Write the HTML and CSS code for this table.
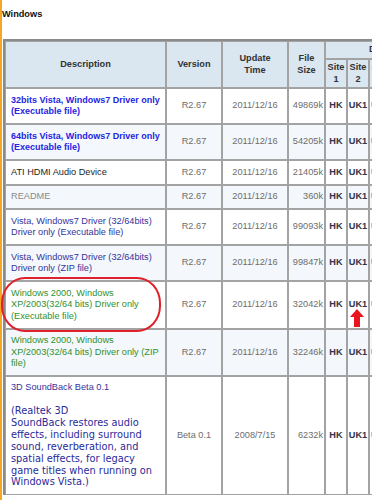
FILE: index.html
```html
<!DOCTYPE html>
<html>
<head>
<meta charset="utf-8">
<link rel="stylesheet" href="styles.css">
</head>
<body>
<div class="page">
  <div class="title">Windows</div>
  <table class="dl">
    <colgroup>
      <col class="c-desc"><col class="c-ver"><col class="c-time"><col class="c-size">
      <col class="c-site"><col class="c-site"><col class="c-site"><col class="c-site"><col class="c-site"><col class="c-site">
    </colgroup>
    <thead>
      <tr class="h1">
        <th rowspan="2">Description</th>
        <th rowspan="2">Version</th>
        <th rowspan="2">Update<br>Time</th>
        <th rowspan="2">File<br>Size</th>
        <th colspan="6">Download</th>
      </tr>
      <tr class="h2">
        <th class="site">Site<br>1</th><th class="site">Site<br>2</th><th class="site">Site<br>3</th><th class="site">Site<br>4</th><th class="site">Site<br>5</th><th class="site">Site<br>6</th>
      </tr>
    </thead>
    <tbody>
      <tr>
        <td class="desc blue">32bits Vista, Windows7 Driver only<br>(Executable file)</td>
        <td class="c">R2.67</td><td class="c">2011/12/16</td><td class="r">49869k</td>
        <td class="s">HK</td><td class="s">UK1</td><td class="s o">US1</td><td class="s">CN1</td><td class="s">CN2</td><td class="s">TW</td>
      </tr>
      <tr class="alt">
        <td class="desc blue">64bits Vista, Windows7 Driver only<br>(Executable file)</td>
        <td class="c">R2.67</td><td class="c">2011/12/16</td><td class="r">54205k</td>
        <td class="s">HK</td><td class="s">UK1</td><td class="s o">US1</td><td class="s">CN1</td><td class="s">CN2</td><td class="s">TW</td>
      </tr>
      <tr>
        <td class="desc black">ATI HDMI Audio Device</td>
        <td class="c">R2.67</td><td class="c">2011/12/16</td><td class="r">21405k</td>
        <td class="s">HK</td><td class="s">UK1</td><td class="s o">US1</td><td class="s">CN1</td><td class="s">CN2</td><td class="s">TW</td>
      </tr>
      <tr class="alt">
        <td class="desc grey">README</td>
        <td class="c">R2.67</td><td class="c">2011/12/16</td><td class="r">360k</td>
        <td class="s">HK</td><td class="s">UK1</td><td class="s o">US1</td><td class="s">CN1</td><td class="s">CN2</td><td class="s">TW</td>
      </tr>
      <tr>
        <td class="desc navy">Vista, Windows7 Driver (32/64bits)<br>Driver only (Executable file)</td>
        <td class="c">R2.67</td><td class="c">2011/12/16</td><td class="r">99093k</td>
        <td class="s">HK</td><td class="s">UK1</td><td class="s o">US1</td><td class="s">CN1</td><td class="s">CN2</td><td class="s">TW</td>
      </tr>
      <tr class="alt">
        <td class="desc navy">Vista, Windows7 Driver (32/64bits)<br>Driver only (ZIP file)</td>
        <td class="c">R2.67</td><td class="c">2011/12/16</td><td class="r">99847k</td>
        <td class="s">HK</td><td class="s">UK1</td><td class="s o">US1</td><td class="s">CN1</td><td class="s">CN2</td><td class="s">TW</td>
      </tr>
      <tr class="tall">
        <td class="desc green">Windows 2000, Windows<br>XP/2003(32/64 bits) Driver only<br>(Executable file)</td>
        <td class="c">R2.67</td><td class="c">2011/12/16</td><td class="r">32042k</td>
        <td class="s">HK</td><td class="s">UK1</td><td class="s o">US1</td><td class="s">CN1</td><td class="s">CN2</td><td class="s">TW</td>
      </tr>
      <tr class="alt tall">
        <td class="desc green">Windows 2000, Windows<br>XP/2003(32/64 bits) Driver only (ZIP<br>file)</td>
        <td class="c">R2.67</td><td class="c">2011/12/16</td><td class="r">32246k</td>
        <td class="s">HK</td><td class="s">UK1</td><td class="s o">US1</td><td class="s">CN1</td><td class="s">CN2</td><td class="s">TW</td>
      </tr>
      <tr>
        <td class="desc navy sb">
          <div class="sb-title">3D SoundBack Beta 0.1</div>
          <p class="sb-text">(Realtek 3D<br>SoundBack restores audio<br>effects, including surround<br>sound, reverberation, and<br>spatial effects, for legacy<br>game titles when running on<br>Windows Vista.)</p>
        </td>
        <td class="c">Beta 0.1</td><td class="c">2008/7/15</td><td class="r">6232k</td>
        <td class="s">HK</td><td class="s">UK1</td><td class="s o">US1</td><td class="s">CN1</td><td class="s">CN2</td><td class="s">TW</td>
      </tr>
    </tbody>
  </table>
  <div class="mark-ring"></div>
  <svg class="mark-arrow" width="14" height="18" viewBox="0 0 14 18">
    <path d="M7 0 L14 8 L10 8 L10 18 L4 18 L4 8 L0 8 Z" fill="#e8141e"/>
  </svg>
</div>
</body>
</html>
```
FILE: styles.css
```css
html, body {
  margin: 0;
  padding: 0;
  overflow: hidden;
  background: #fff;
}
.page {
  position: relative;
  border-left: 2px solid #f5a623;
  min-height: 500px;
  font-family: "Liberation Sans", Arial, sans-serif;
  font-size: 9px;
  color: #333;
}
.title {
  font-weight: bold;
  color: #111;
  font-size: 9.2px;
  line-height: 11px;
  padding: 9px 0 0 0;
  height: 30px;
}
.dl {
  margin-left: 1px;
  table-layout: fixed;
  width: 454px;
  border-collapse: separate;
  border-spacing: 0;
  border-top: 2px solid #8a8a8a;
  border-left: 2px solid #8a8a8a;
}
.c-desc { width: 161px; }
.c-ver { width: 56px; }
.c-time { width: 66px; }
.c-size { width: 37px; }
.c-site { width: 22px; }
.dl th, .dl td {
  border: 1px solid #a3a3a3;
  line-height: 11.5px;
  font-size: 9.2px;
  vertical-align: middle;
  overflow: hidden;
  white-space: nowrap;
}
.dl th {
  background: #dae6f0;
  color: #333;
  font-weight: bold;
  text-align: center;
  padding: 2px 0;
  line-height: 11.5px;
}
.h1 th { height: 12px; }
.h2 th { height: 23px; }
.dl td {
  padding: 5.5px 1px;
  color: #6d6d6d;
}
.alt td { background: #f4f7fb; }
.dl td.desc {
  padding: 5.5px 2px 5.5px 5px;
  white-space: normal;
}
.c { text-align: center; }
.r { text-align: right; }
.dl td.s {
  text-align: center;
  font-weight: bold;
  color: #33334a;
  padding: 0;
}
.dl td.o { color: #c8861e; text-align: left; padding-left: 1px; }
.blue { color: #2525e2 !important; font-weight: bold; font-size: 9px !important; }
.black { color: #1e1e1e !important; }
.grey { color: #8a8a8a !important; }
.navy { color: #34349c !important; }
.green { color: #2f902f !important; }
.tall td { padding-top: 6.5px; padding-bottom: 6.5px; }
.dl td.sb { vertical-align: top; padding-top: 5px; padding-bottom: 6px; }
.sb-title { line-height: 11px; }
.sb-text {
  margin: 12px 0 0 0;
  font-family: "DejaVu Sans", Verdana, sans-serif;
  font-size: 9.8px;
  line-height: 11.9px;
  color: #2a2a9a;
  white-space: nowrap;
}
.mark-ring {
  position: absolute;
  left: -1px;
  top: 277px;
  width: 156px;
  height: 51px;
  border: 2px solid #e0202a;
  border-radius: 24px / 26px;
}
.mark-arrow {
  position: absolute;
  left: 348px;
  top: 309px;
}
```
